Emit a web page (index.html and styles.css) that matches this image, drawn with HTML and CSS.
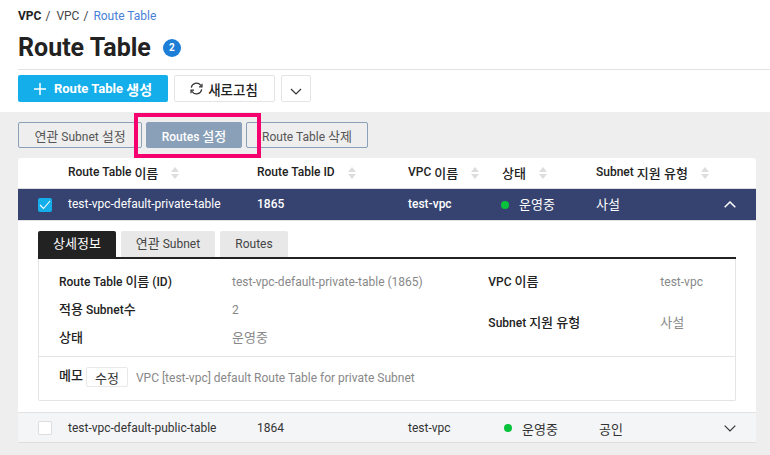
FILE: index.html
```html
<!DOCTYPE html>
<html lang="ko">
<head>
<meta charset="utf-8">
<title>Route Table</title>
<link rel="stylesheet" href="styles.css">
</head>
<body>
<header class="top">
  <nav class="crumbs"><b>VPC</b><span class="sep">/</span><span>VPC</span><span class="sep">/</span><span class="cur">Route Table</span></nav>
  <div class="title-row"><h1>Route Table</h1><span class="badge">2</span></div>
  <div class="toolbar">
    <button class="btn primary"><svg class="plus" width="12" height="12" viewBox="0 0 12 12"><path d="M6 0v12M0 6h12" stroke="#fff" stroke-width="1.5" fill="none"/></svg>Route Table&nbsp;<span class="ko">생성</span></button>
    <button class="btn refresh"><svg width="13" height="13" viewBox="0 0 13 13" fill="none" stroke="#333" stroke-width="1.2"><path d="M1.3 5.6A5.2 5.2 0 0 1 10.6 3.2L11.6 4.6"/><path d="M11.7 7.4A5.2 5.2 0 0 1 2.4 9.8L1.4 8.4"/><path d="M12 1.8v3h-3M1 11.2v-3h3"/></svg><span class="ko">새로고침</span></button>
    <button class="btn more"><svg class="more-icon" width="12" height="7" viewBox="0 0 12 7"><path d="M1 1l5 5 5-5" stroke="#333" stroke-width="1.2" fill="none"/></svg></button>
  </div>
</header>
<main class="content">
  <div class="actions">
    <button class="act w1"><span class="ko">연관</span> Subnet <span class="ko">설정</span></button>
    <button class="act act-on w2">Routes <span class="ko">설정</span></button>
    <button class="act w3">Route Table <span class="ko">삭제</span></button>
  </div>
  <span class="mark"></span>
  <section class="table">
    <div class="row head">
      <span></span>
      <span class="th">Route Table&nbsp;<span class="ko">이름</span><i class="sort"></i></span>
      <span class="th">Route Table ID<i class="sort"></i></span>
      <span class="th">VPC&nbsp;<span class="ko">이름</span><i class="sort"></i></span>
      <span class="th"><span class="ko">상태</span><i class="sort"></i></span>
      <span class="th">Subnet&nbsp;<span class="ko">지원 유형</span><i class="sort"></i></span>
    </div>
    <div class="row selected">
      <span class="check on"><svg width="12" height="10" viewBox="0 0 12 10"><path d="M1 5l3.5 3.5L11 1" stroke="#fff" stroke-width="1.1" fill="none"/></svg></span>
      <span class="lift">test-vpc-default-private-table</span>
      <span class="lift strong">1865</span>
      <span class="lift strong">test-vpc</span>
      <span class="status lift"><i class="dot"></i><span class="ko">운영중</span></span>
      <span class="ko lift">사설</span>
      <svg class="chev" width="12" height="7" viewBox="0 0 12 7"><path d="M.7 6.3L6 1l5.3 5.3" stroke="#fff" stroke-width="1.5" fill="none"/></svg>
    </div>
    <div class="detail">
      <div class="tabs">
        <span class="tab active ko">상세정보</span>
        <span class="tab t2"><span class="ko">연관</span> Subnet</span>
        <span class="tab t3">Routes</span>
      </div>
      <div class="box">
        <div class="info">
          <dl class="col-left">
            <div class="pair"><dt>Route Table <span class="ko">이름</span> (ID)</dt><dd>test-vpc-default-private-table (1865)</dd></div>
            <div class="pair"><dt><span class="ko">적용</span> Subnet<span class="ko">수</span></dt><dd>2</dd></div>
            <div class="pair"><dt class="ko">상태</dt><dd class="ko">운영중</dd></div>
          </dl>
          <dl class="col-right">
            <div class="pair"><dt>VPC <span class="ko">이름</span></dt><dd>test-vpc</dd></div>
            <div class="pair"><dt>Subnet <span class="ko">지원 유형</span></dt><dd class="ko">사설</dd></div>
          </dl>
        </div>
        <div class="memo"><b class="ko">메모</b><button class="edit ko">수정</button><span class="memo-text">VPC [test-vpc] default Route Table for private Subnet</span></div>
      </div>
    </div>
    <div class="row plain">
      <span class="check"></span>
      <span>test-vpc-default-public-table</span>
      <span>1864</span>
      <span>test-vpc</span>
      <span class="status"><i class="dot"></i><span class="ko">운영중</span></span>
      <span class="ko">공인</span>
      <svg class="chev" width="12" height="7" viewBox="0 0 12 7"><path d="M.7 .7L6 6l5.3-5.3" stroke="#333" stroke-width="1.2" fill="none"/></svg>
    </div>
  </section>
</main>
</body>
</html>
```
FILE: styles.css
```css
* { box-sizing: border-box; }
html, body { margin: 0; padding: 0; }
body {
  width: 770px; height: 455px; overflow: hidden; background: #eee;
  font-family: Roboto, "Noto Sans CJK KR", sans-serif; font-size: 12px; color: #222;
}
button { font-family: inherit; cursor: pointer; padding: 0; }
.ko { font-size: 13px; }
.top { background: #fff; height: 112px; padding: 8px 0 0 18px; }
.crumbs { display: flex; height: 16px; line-height: 16px; font-size: 12px; color: #444; }
.crumbs b { color: #222; font-weight: 700; }
.crumbs .sep { margin: 0 6px 0 4px; }
.crumbs .sep:nth-of-type(n+3) { margin-right: 5px; }
.crumbs .cur { color: #4a7fd8; }
.title-row { display: flex; align-items: center; height: 29px; margin-top: 9px; }
h1 { margin: 0; font-size: 25px; font-weight: 700; color: #222; line-height: 29px; }
.badge {
  width: 18px; height: 18px; margin-left: 12px; border-radius: 50%; background: #1c7ed6;
  color: #fff; font-size: 10px; font-weight: 700; line-height: 18px; text-align: center;
}
.toolbar {
  display: flex; gap: 6px; margin-top: 7px; padding-top: 5px; border-top: 1px solid #e2e2e2; height: 33px;
}
.btn { height: 27px; border-radius: 2px; border: 1px solid #e4e4e4; background: #fff; display: flex; align-items: center; justify-content: center; }
.primary { width: 150px; background: #14aeea; border: 0; color: #fff; font-size: 13px; font-weight: 700; }
.primary .ko { font-size: 14px; }
.plus { margin-right: 8px; }
.refresh { width: 101px; color: #222; gap: 5px; padding-right: 1px; }
.refresh .ko { font-size: 13.5px; font-weight: 500; }
.more { width: 30px; }
.more-icon { margin-top: 6px; }
.content { position: relative; padding: 10px 14px 0 18px; }
.actions { display: flex; gap: 4px; height: 26px; }
.act { height: 26px; border: 1px solid #8a9fb8; border-radius: 2px; background: transparent; color: #555; font-size: 12px; }
.w1 { width: 124px; }
.w2 { width: 96px; }
.w3 { width: 122px; }
.act-on { background: #8a9fb8; color: #fff; font-weight: 500; }
.mark { position: absolute; left: 134px; top: 1px; width: 127px; height: 45px; border: 4px solid #f5006e; }
.table { margin-top: 10px; background: #fff; border-radius: 3px 3px 0 0; }
.row {
  display: grid; grid-template-columns: 50px 189px 151px 94px 94px 1fr 34px; align-items: center;
}
.head { height: 31px; border-bottom: 1px solid #ddd; font-weight: 500; color: #222; border-radius: 3px 3px 0 0; }
.th { display: flex; align-items: center; white-space: nowrap; padding-bottom: 2px; }
.sort { display: inline-block; width: 8px; height: 12px; margin: 2px 0 0 13px; position: relative; }
.sort::before, .sort::after { content: ""; position: absolute; left: 0; border-left: 4px solid transparent; border-right: 4px solid transparent; }
.sort::before { top: 0; border-bottom: 5px solid #ddd; }
.sort::after { bottom: 0; border-top: 5px solid #ddd; }
.selected { height: 32px; background: #364370; color: #fff; border-bottom: 1px solid #e2e2e2; }
.lift { padding-bottom: 2px; }
.strong { font-weight: 500; }
.plain { height: 31px; padding-top: 1px; background: #f4f5f7; border-top: 1px solid #e2e2e2; border-bottom: 1px solid #ddd; grid-template-columns: 50px 189px 151px 96px 95px 1fr 34px; color: #333; }
.check { width: 14px; height: 14px; margin-left: 20px; border: 1px solid #ddd; border-radius: 2px; background: #fff; display: flex; align-items: center; justify-content: center; }
.check.on { background: #14aeea; border: 0; }
.status { display: flex; align-items: center; }
.dot { width: 8px; height: 8px; border-radius: 50%; background: #0ac33c; margin-right: 10px; }
.selected .dot { margin: 2px 10px 0 -1px; }
.chev { justify-self: start; margin-left: 2px; }
.detail { height: 191px; padding: 10px 20px 0; }
.tabs { display: flex; gap: 5px; height: 28px; border-bottom: 2px solid #222; }
.tab { height: 26px; line-height: 26px; text-align: center; background: #e8e8e8; border-radius: 2px 2px 0 0; color: #444; }
.tab.active { width: 78px; background: #222; color: #fff; }
.t2 { width: 94px; }
.t3 { width: 68px; }
.box { height: 142px; border: 1px solid #e4e4e4; border-top: 0; border-radius: 0 0 2px 2px; }
.info { display: flex; height: 98px; padding: 9px 0 0 20px; border-bottom: 1px solid #e4e4e4; }
dl { margin: 0; }
.col-left { width: 430px; }
.col-right { width: 247px; }
.pair { display: flex; height: 28px; line-height: 28px; }
.col-right .pair:last-child { margin-top: 13px; }
dt { font-weight: 500; color: #222; }
dd { margin: 0; color: #888; }
.col-left dt { width: 173px; }
.col-right dt { width: 172px; }
.memo { display: flex; align-items: center; height: 43px; padding: 0 0 3px 20px; }
.memo b { font-weight: 500; margin-bottom: 5px; }
.edit { width: 42px; height: 20px; margin: 0 8px 0 3px; border: 1px solid #e8e8e8; border-radius: 2px; background: #fff; color: #333; }
.memo-text { color: #888; margin-top: 2px; }
```
